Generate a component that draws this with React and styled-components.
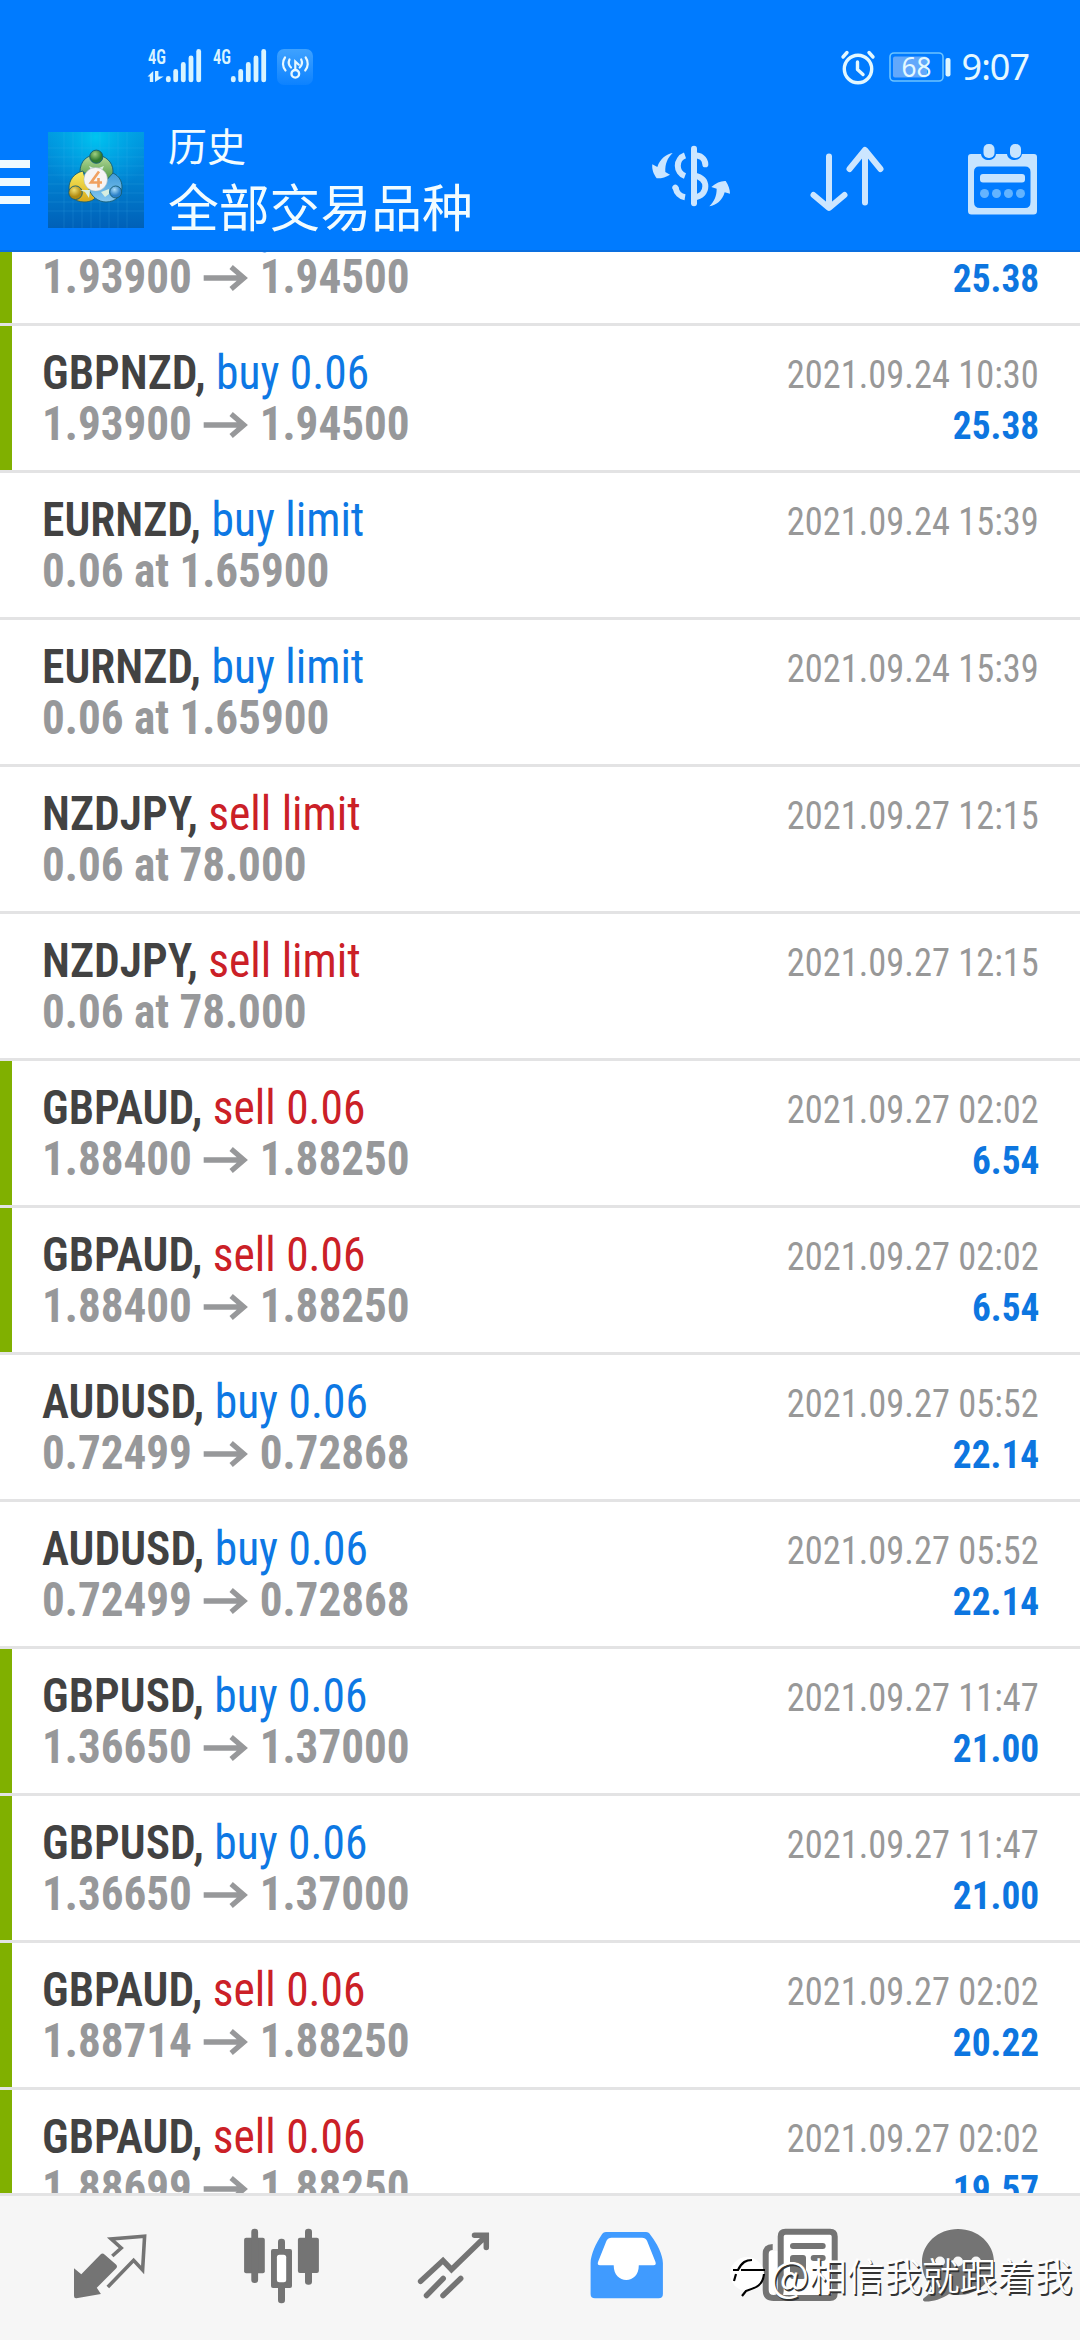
import React from "react";
import styled, { createGlobalStyle } from "styled-components";

const GlobalStyle = createGlobalStyle`
  *, *::before, *::after { box-sizing: border-box; }
  body { margin: 0; background: #fff; }
  svg { overflow: visible; }
`;

const condensed = `"Roboto Condensed", Roboto, "Liberation Sans Narrow", sans-serif`;

const Screen = styled.div`
  position: relative;
  display: flex;
  flex-direction: column;
  width: 1080px;
  height: 2340px;
  overflow: hidden;
  background: #fff;
  font-family: ${condensed};
`;

const Header = styled.header`
  display: flex;
  flex-direction: column;
  flex: none;
  height: 252px;
  background: #007bff;
  border-bottom: 2px solid #0a6fe0;
`;

const StatusBar = styled.div`
  display: flex;
  align-items: flex-start;
  justify-content: space-between;
  height: 120px;
  padding: 48px 51px 0 147px;
`;

const StatusGroup = styled.div`
  display: flex;
  align-items: center;
  height: 37px;
`;

const AlarmSlot = styled.span`
  display: flex;
  margin-right: 14px;
`;

const Clock = styled.span`
  margin-left: 11px;
  font: 400 36px/37px "Noto Sans", sans-serif;
  letter-spacing: -1px;
  color: #e6f8ff;
`;

const TitleBar = styled.div`
  display: flex;
  align-items: flex-start;
  height: 130px;
  padding-right: 43px;
`;

const MenuButton = styled.div`
  display: flex;
  flex-direction: column;
  gap: 10px;
  width: 30px;
  margin-top: 40px;
`;

const MenuLine = styled.span`
  height: 8px;
  background: #effaff;
`;

const LogoTile = styled.svg`
  flex: none;
  margin: 12px 0 0 18px;
`;

const Titles = styled.div`
  display: flex;
  flex-direction: column;
  margin: -3px 0 0 24px;
  font-family: "Noto Sans CJK SC", sans-serif;
  color: #f2fcff;
`;

const Subtitle = styled.div`
  height: 54px;
  font-size: 39px;
  line-height: 54px;
`;

const Title = styled.div`
  height: 68px;
  font-size: 50.8px;
  line-height: 68px;
`;

const Actions = styled.div`
  display: flex;
  align-items: flex-start;
  margin-left: auto;
`;

const ActionIcon = styled.svg`
  flex: none;
  margin-top: ${(p) => p.$top}px;
  margin-left: ${(p) => p.$gap || 0}px;
`;

const List = styled.main`
  flex: 1;
  min-height: 0;
  overflow: hidden;
`;

const Row = styled.section`
  display: flex;
  justify-content: space-between;
  height: 147px;
  padding: 21px 41px 0 42px;
  border-bottom: 3px solid #e3e3e4;
  background: linear-gradient(to right, ${(p) => (p.$marked ? "#80b000" : "#fff")} 12px, #fff 12px) padding-box;
  &:first-child { margin-top: -73px; }
`;

const Side = styled.div`
  display: flex;
  flex-direction: column;
  align-items: ${(p) => (p.$end ? "flex-end" : "flex-start")};
  white-space: nowrap;
`;

const Line = styled.div`
  height: 51px;
  font-size: 48px;
  line-height: 51px;
  transform: scaleX(${(p) => p.$narrow});
  transform-origin: ${(p) => (p.$end ? "right" : "left")};
`;

const Symbol = styled(Line)`
  font-weight: 650;
  color: #424242;
`;

const Order = styled.span`
  font-weight: 400;
  color: ${(p) => (p.$sell ? "#cb2027" : "#0d78e4")};
`;

const Prices = styled(Line)`
  font-weight: 700;
  color: #97989a;
`;

const Arrow = styled.svg`
  margin: 0 11.7px 2px 12.4px;
`;

const Time = styled(Line)`
  font-size: 39px;
  line-height: 57px;
  color: #989898;
`;

const Profit = styled(Time)`
  font-weight: 700;
  color: #0d76e0;
`;

const TabBar = styled.nav`
  display: flex;
  flex: none;
  height: 147px;
  padding: 0 24px;
  border-top: 3px solid #e3e3e4;
  background: #f6f6f6;
`;

const Tab = styled.div`
  display: flex;
  justify-content: center;
  width: 172px;
  padding-top: 25px;
  color: ${(p) => (p.$active ? "#409bff" : "#747474")};
`;

const Watermark = styled.div`
  position: absolute;
  left: 728px;
  top: 2246px;
  display: flex;
  align-items: center;
  height: 56px;
  font: 350 37.6px/56px "Noto Sans CJK SC", sans-serif;
  color: #fff;
  text-shadow: 1.5px 1.5px 0 #333;
  white-space: nowrap;
`;

const At = styled.span`
  font-size: 42px;
`;

const signalBars = [[168.3, 76], [175.7, 69], [183.3, 62], [191, 55.5], [198.7, 49]];

const Signal = ({ data }) => (
  <svg width="65" height="37" viewBox="147 48 65 37">
    <text x="148" y="64.3" fontSize="21" fontWeight="600" textLength="18" lengthAdjust="spacingAndGlyphs" fill="#d9f4ff" fontFamily="Roboto Condensed">4G</text>
    {data && (
      <g fill="#d9f4ff">
        <path d="M147.500 76.500l5.700-5.500v11h-3.400v-5.500z" />
        <path d="M155 71h3.400v5.500h5.300L155 82z" />
      </g>
    )}
    <g fill="#d9f4ff">
      {signalBars.map(([x, y]) => <rect key={x} x={x - 2.4} y={y} width="4.800" height={82.3 - y} rx="2.400" />)}
    </g>
  </svg>
);

const Vpn = () => (
  <svg width="36" height="36" viewBox="0 0 36 36">
    <defs><linearGradient id="vpn" x2="0" y2="1"><stop stopColor="#3fa2ff" /><stop offset="1" stopColor="#0d82ff" /></linearGradient></defs>
    <rect width="36" height="36" rx="7" fill="url(#vpn)" />
    <g fill="none" stroke="#e8f8ff" strokeWidth="2.200" strokeLinecap="round">
      <circle cx="18.300" cy="24.800" r="3.800" strokeWidth="2.400" />
      <path d="M18.300 21V12.500l3.500 3.200M12.500 10.500a7 7 0 0 0 1.500 8M8 8.500a10.500 10.500 0 0 0 .5 13M24.200 10.500a7 7 0 0 1-1.500 8M28.700 8.500a10.500 10.500 0 0 1-.5 13" />
    </g>
  </svg>
);

const Alarm = () => (
  <svg width="34" height="36" viewBox="0 0 34 36">
    <g fill="none" stroke="#e3f8ff" strokeWidth="3.400" strokeLinecap="round" strokeLinejoin="round">
      <circle cx="17" cy="20" r="13.700" />
      <path d="M16.500 13v7.500l5.500 5M2 8l4-4.500M32 8l-4-4.500" />
    </g>
  </svg>
);

const Battery = () => (
  <svg width="62" height="30" viewBox="0 0 62 30">
    <rect x="1" y="1" width="53" height="28" rx="4" fill="none" stroke="#6cc4ff" strokeWidth="1.600" />
    <rect x="4" y="4.500" width="34" height="21" rx="2" fill="#62a8fb" />
    <rect x="56.500" y="6" width="5" height="18.500" rx="2" fill="#e0f6ff" />
    <text x="12.500" y="24.800" fontSize="27" textLength="30" lengthAdjust="spacingAndGlyphs" fill="#e3f8ff" fontFamily="Noto Sans">68</text>
  </svg>
);

const Logo = () => (
  <LogoTile width="96" height="96" viewBox="0 0 96 96">
    <defs>
      <linearGradient id="bg" x2="0" y2="1"><stop stopColor="#0098e0" /><stop offset=".5" stopColor="#0080d0" /><stop offset="1" stopColor="#0060b8" /></linearGradient>
      <radialGradient id="glow" cx=".5" cy=".05" r=".6"><stop stopColor="#00c4f0" /><stop offset="1" stopColor="#00a8e8" stopOpacity="0" /></radialGradient>
      <linearGradient id="gr" x2="0" y2="1"><stop stopColor="#b8dc9c" /><stop offset="1" stopColor="#3f8d35" /></linearGradient>
      <linearGradient id="ye" x2="0" y2="1"><stop stopColor="#f8ec60" /><stop offset="1" stopColor="#d8a818" /></linearGradient>
      <linearGradient id="bl" x2="0" y2="1"><stop stopColor="#3f9ad8" /><stop offset="1" stopColor="#86c8f0" /></linearGradient>
      <radialGradient id="gb" cx=".4" cy=".3"><stop stopColor="#9fd083" /><stop offset="1" stopColor="#2f7a30" /></radialGradient>
      <radialGradient id="yb" cx=".4" cy=".3"><stop stopColor="#f2e070" /><stop offset="1" stopColor="#b08a10" /></radialGradient>
      <radialGradient id="bb" cx=".4" cy=".3"><stop stopColor="#a8dcf8" /><stop offset="1" stopColor="#2a80c8" /></radialGradient>
    </defs>
    <rect width="96" height="96" fill="url(#bg)" />
    <rect width="96" height="96" fill="url(#glow)" />
    <path d="M16 0v96M25 0v96M34 0v96M43 0v96M52 0v96M61 0v96M70 0v96M79 0v96M0 16h96M0 25h96M0 34h96M0 43h96M0 52h96M0 61h96M0 70h96M0 79h96" stroke="#4cc0f0" strokeOpacity=".16" />
    <g stroke="#155c74" strokeWidth=".9">
      <path d="M32 40c0-11 7-17 16-17s17 7 17 16c0 6-2 10-5 13l-9-8z" fill="url(#gr)" />
      <path d="M35 39c-9 2-14 9-14 17s6 14 15 14c6 0 10-2 12-5l-9-12z" fill="url(#ye)" />
      <path d="M65 41c6 3 9 8 9 14 0 9-7 15-16 15-8 0-15-6-17-13l14-5z" fill="url(#bl)" />
      <circle cx="48.300" cy="24.700" r="6.600" fill="url(#gb)" />
      <circle cx="27.500" cy="60.700" r="6.800" fill="url(#yb)" />
      <circle cx="67.700" cy="60" r="6" fill="url(#bb)" />
    </g>
    <path d="M41 34l7 3 8-3-3 6H44zM32 58l5 2 4 6 1-8zM53 60l4 5 4-3v-5z" fill="#d8eee0" />
    <circle cx="47.700" cy="47.300" r="11.800" fill="#f6f4f4" stroke="#9ab0b8" strokeWidth=".5" />
    <path d="M51 39.500L43 50.500h11M50.500 46v9.500" fill="none" stroke="#f0a060" strokeWidth="2.600" />
  </LogoTile>
);

const Dollar = () => (
  <ActionIcon $top={24} width="80" height="64" viewBox="30 48 240 192">
    <g fill="none" stroke="#cce6ff" strokeWidth="18">
      <path d="M132 82a33 33 0 0 0 0 62M104 180a34 34 0 0 0 28 28" />
      <path d="M103 179l1 1" strokeLinecap="round" />
      <path d="M159 62v164" strokeLinecap="round" />
      <path d="M160 82c18 0 32 9 33 27" strokeLinecap="round" />
      <path d="M160 142c22 5 33 16 33 33s-12 31-33 33" />
    </g>
    <path fill="#cce6ff" d="M95 75C76 78 57 92 49 117L34 109C32 124 38 139 47 151Q68 152 87 140L73 132C72 108 79 90 95 75z" />
    <path fill="#cce6ff" d="M205 235C226 232 244 218 251 193L267 197C267 184 262 171 254 159Q232 158 211 177L227 182C227 204 220 220 205 235z" />
  </ActionIcon>
);

const Sort = () => (
  <ActionIcon $top={25} $gap={78} width="76" height="68" viewBox="0 0 76 68">
    <path d="M20 12v49M4.500 50.500L20 63.500l15.500-13M56 58V6.500M40.500 24.500L56 5.500l15.500 19" transform="translate(0 -.5)" fill="none" stroke="#cce6ff" strokeWidth="6" strokeLinecap="round" strokeLinejoin="round" />
  </ActionIcon>
);

const Calendar = () => (
  <ActionIcon $top={23} $gap={83} width="69" height="72" viewBox="0 0 69 72">
    <path fillRule="evenodd" fill="#c6e4ff" d="M3 11H13C14 19 27 19 28 11H39C40 19 53 19 54 11H66Q69 11 69 14V68Q69 71.500 65.500 71.500H3.500Q0 71.500 0 68V14Q0 11 3 11zM11 23.500Q6 23.500 6 29V59Q6 65 12 65H57Q62.500 65 62.500 59V29Q62.500 23.500 57 23.500z" />
    <rect x="15.500" y="1" width="11" height="14" rx="5" fill="#c6e4ff" />
    <rect x="42" y="1" width="11" height="14" rx="5" fill="#c6e4ff" />
    <rect x="12" y="31" width="45" height="8.500" rx="3" fill="#c6e4ff" />
    <g fill="#63b4ff"><circle cx="16.500" cy="50.500" r="4.500" /><circle cx="28.500" cy="50.500" r="4.500" /><circle cx="40.500" cy="50.500" r="4.500" /><circle cx="52.500" cy="50.500" r="4.500" /></g>
  </ActionIcon>
);

const TabSvg = ({ children }) => <svg width="90" height="90" viewBox="0 0 90 90" fill="currentColor">{children}</svg>;

const tabs = [
  <>
    <path d="M9 47.300l7.300 6L35.500 33.500q2-2 4 0L51 43.500q2 2 0 4L31.800 66.700l4.100 6.300L11.400 77.300Q9 77.500 9 75z" />
    <path d="M47.300 35l8.900-8-10-9 33.400-2.700-2 33.700-9-9.700L42.800 66" fill="none" stroke="currentColor" strokeWidth="3.600" />
  </>,
  <>
    <rect x="7.100" y="16.700" width="20.700" height="35.600" rx="2" /><rect x="14.300" y="7.700" width="6.800" height="54.300" rx="3.200" />
    <rect x="60.900" y="16.700" width="21" height="35.300" rx="2" /><rect x="68" y="7.700" width="7" height="56" rx="3.200" />
    <rect x="34" y="28" width="21" height="39" rx="2" /><rect x="41" y="17.700" width="7" height="64.500" rx="3.200" />
    <rect x="39.900" y="33.700" width="9.300" height="27.600" rx="2.500" fill="#fff" />
  </>,
  <path d="M11.600 60.300L34 39.500l8.500 9L77 15M65.500 14.200H77.300V26.500M17.500 74.500L34.200 57.500M34 74.500L51.700 57.500" fill="none" stroke="currentColor" strokeWidth="5.500" strokeLinecap="round" />,
  <>
    <path fillRule="evenodd" d="M25 11h40q3 0 4.500 3C76 22 81.900 34 81.900 42V73q0 4.300-4.300 4.300H14Q9.600 77.300 9.600 73V42C9.600 34 15 22 20.500 14q1.500-3 4.500-3z" />
    <path fill="#fff" d="M30.500 16.700H61q3.500 0 5 3L74.500 41q1 3.300-2 3.300H57.800C57.800 54 52 59 45.300 59S32.700 54 32.700 44.300H19q-3 0-2-3.300l8.500-21.300q1.500-3 5-3z" />
  </>,
  <>
    <path fill="#fff" d="M12 30h14V10h56v67H12z" />
    <path d="M19.700 26Q12.700 26 12.700 33V69q0 8 8 8H77q4.700 0 4.700-4.700V15.500q0-4.800-4.700-4.800H32.500q-4.800 0-4.800 4.800V70q0 7-7 7" fill="none" stroke="currentColor" strokeWidth="6" />
    <rect x="37" y="22" width="35.700" height="6" rx="3" /><rect x="37" y="34" width="16" height="24" rx="3" /><rect x="57.700" y="34" width="15" height="6" rx="3" />
  </>,
  <>
    <path d="M33 8c20 0 36 14.500 36 33S53 74 33 74c-3 0-6-.3-9-1-7 5-16 7.500-23 7.500-3 0-4-2-2-3.500 4-3 7-6 8.500-10C.500 60-3 51-3 41-3 22.500 13 8 33 8z" />
    <g fill="#f7f7f7"><circle cx="15" cy="40.500" r="5" /><circle cx="33" cy="40.500" r="5" /><circle cx="51" cy="40.500" r="5" /></g>
  </>,
];

const rows = [
  ["GBPNZD", "buy 0.06", "1.93900", "1.94500", "2021.09.24 10:30", "25.38", true],
  ["GBPNZD", "buy 0.06", "1.93900", "1.94500", "2021.09.24 10:30", "25.38", true],
  ["EURNZD", "buy limit", "0.06 at 1.65900", null, "2021.09.24 15:39"],
  ["EURNZD", "buy limit", "0.06 at 1.65900", null, "2021.09.24 15:39"],
  ["NZDJPY", "sell limit", "0.06 at 78.000", null, "2021.09.27 12:15"],
  ["NZDJPY", "sell limit", "0.06 at 78.000", null, "2021.09.27 12:15"],
  ["GBPAUD", "sell 0.06", "1.88400", "1.88250", "2021.09.27 02:02", "6.54", true],
  ["GBPAUD", "sell 0.06", "1.88400", "1.88250", "2021.09.27 02:02", "6.54", true],
  ["AUDUSD", "buy 0.06", "0.72499", "0.72868", "2021.09.27 05:52", "22.14"],
  ["AUDUSD", "buy 0.06", "0.72499", "0.72868", "2021.09.27 05:52", "22.14"],
  ["GBPUSD", "buy 0.06", "1.36650", "1.37000", "2021.09.27 11:47", "21.00", true],
  ["GBPUSD", "buy 0.06", "1.36650", "1.37000", "2021.09.27 11:47", "21.00", true],
  ["GBPAUD", "sell 0.06", "1.88714", "1.88250", "2021.09.27 02:02", "20.22", true],
  ["GBPAUD", "sell 0.06", "1.88699", "1.88250", "2021.09.27 02:02", "19.57", true],
];

export default function App() {
  return (
    <Screen>
      <GlobalStyle />
      <Header>
        <StatusBar>
          <StatusGroup><Signal data /><Signal /><Vpn /></StatusGroup>
          <StatusGroup><AlarmSlot><Alarm /></AlarmSlot><Battery /><Clock>9:07</Clock></StatusGroup>
        </StatusBar>
        <TitleBar>
          <MenuButton><MenuLine /><MenuLine /><MenuLine /></MenuButton>
          <Logo />
          <Titles><Subtitle>历史</Subtitle><Title>全部交易品种</Title></Titles>
          <Actions><Dollar /><Sort /><Calendar /></Actions>
        </TitleBar>
      </Header>
      <List>
        {rows.map(([symbol, order, from, to, time, profit, marked], i) => (
          <Row key={i} $marked={marked}>
            <Side>
              <Symbol $narrow={0.9476}>{symbol}, <Order $sell={order.startsWith("sell")}>{order}</Order></Symbol>
              <Prices $narrow={0.94}>
                {from}
                {to && <Arrow width="48" height="26" viewBox="0 0 46 26" preserveAspectRatio="none"><path d="M0 13h42M28 2l13 11-13 11" fill="none" stroke="currentColor" strokeWidth="5.300" /></Arrow>}
                {to}
              </Prices>
            </Side>
            <Side $end>
              <Time $end $narrow={0.934}>{time}</Time>
              {profit && <Profit $end $narrow={0.958}>{profit}</Profit>}
            </Side>
          </Row>
        ))}
      </List>
      <TabBar>{tabs.map((t, i) => <Tab key={i} $active={i === 3}><TabSvg>{t}</TabSvg></Tab>)}</TabBar>
      <Watermark>
        <svg width="42" height="44" viewBox="0 0 42 44">
          <circle cx="19" cy="22" r="17" fill="#fff" />
          <path d="M5 18h5c4-8 8-10 14-10M13 18h24M8 22l-2 7M36 22c-1 12-9 14-18 17l-4 5" fill="none" stroke="#000" strokeWidth="2.200" />
        </svg>
        <At>@</At>相信我就跟着我
      </Watermark>
    </Screen>
  );
}
